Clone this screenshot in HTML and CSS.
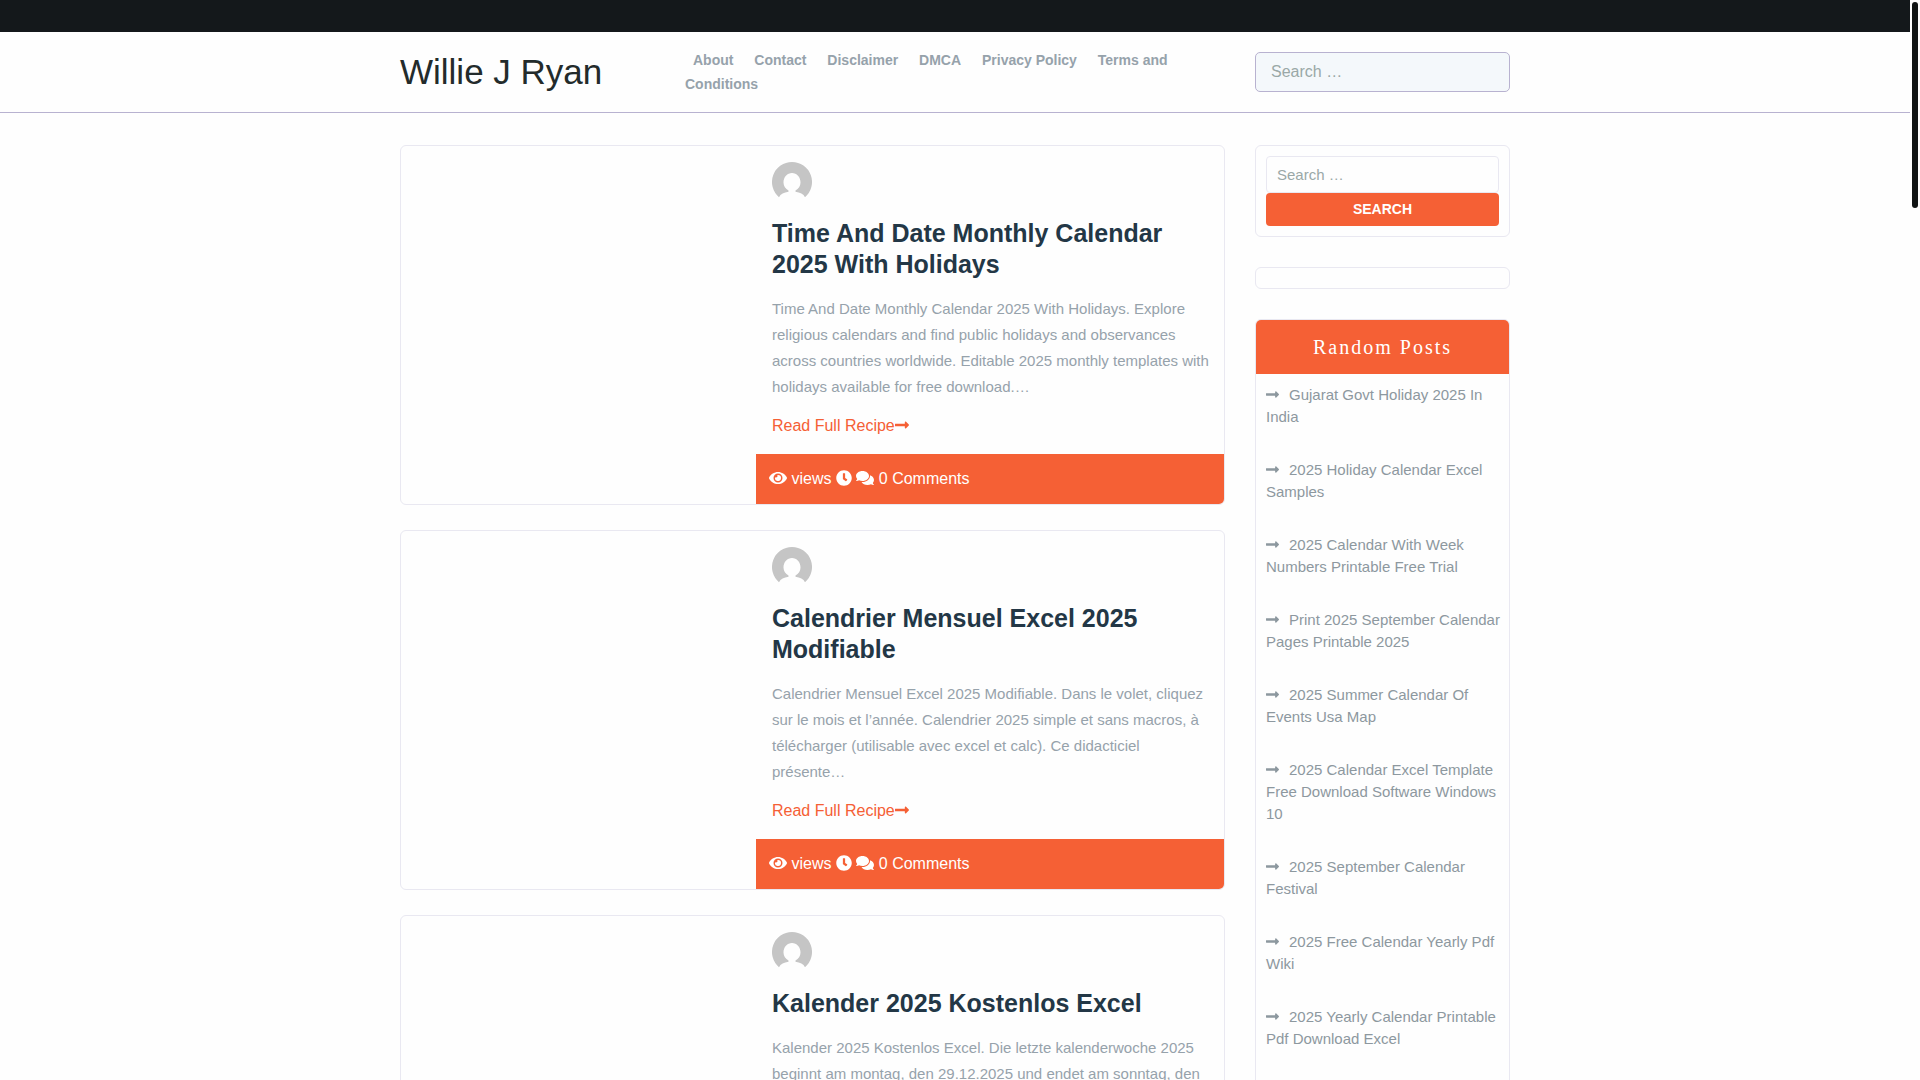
FILE: index.html
```html
<!DOCTYPE html>
<html lang="en">
<head>
<meta charset="utf-8">
<meta name="viewport" content="width=device-width, initial-scale=1">
<title>Willie J Ryan</title>
<link rel="stylesheet" href="styles.css">
</head>
<body>
<svg class="sprite" aria-hidden="true">
  <symbol id="arrow" viewBox="0 0 448 512"><path d="M313.941 216H12c-6.627 0-12 5.373-12 12v56c0 6.627 5.373 12 12 12h301.941v46.059c0 21.382 25.851 32.09 40.971 16.971l86.059-86.059c9.373-9.373 9.373-24.569 0-33.941l-86.059-86.059c-15.119-15.119-40.971-4.411-40.971 16.971V216z"/></symbol>
  <symbol id="eye" viewBox="0 0 576 512"><path d="M572.52 241.4C518.29 135.59 410.93 64 288 64S57.68 135.64 3.48 241.41a32.35 32.35 0 0 0 0 29.19C57.71 376.41 165.07 448 288 448s230.32-71.64 284.52-177.41a32.35 32.35 0 0 0 0-29.19zM288 400a144 144 0 1 1 144-144 143.93 143.93 0 0 1-144 144zm0-240a95.31 95.31 0 0 0-25.31 3.79 47.85 47.85 0 0 1-66.9 66.9A95.78 95.78 0 1 0 288 160z"/></symbol>
  <symbol id="clock" viewBox="0 0 512 512"><path d="M256 8C119 8 8 119 8 256s111 248 248 248 248-111 248-248S393 8 256 8zm57.100 350.100L224.900 294c-3.100-2.300-4.900-5.900-4.900-9.700V116c0-6.600 5.400-12 12-12h48c6.600 0 12 5.400 12 12v137.700l63.500 46.200c5.400 3.900 6.500 11.400 2.600 16.800l-28.200 38.800c-3.900 5.300-11.400 6.500-16.800 2.600z"/></symbol>
  <symbol id="comments" viewBox="0 0 576 512"><path d="M416 192c0-88.400-93.100-160-208-160S0 103.600 0 192c0 34.300 14.100 65.900 38 92-13.400 30.200-35.500 54.200-35.800 54.500-2.200 2.300-2.800 5.700-1.500 8.700S4.800 352 8 352c36.600 0 66.900-12.300 88.700-25 32.200 15.700 70.300 25 111.300 25 114.900 0 208-71.600 208-160zm122 220c23.900-26 38-57.700 38-92 0-66.900-53.500-124.200-129.300-148.100.9 6.600 1.300 13.300 1.300 20.100 0 105.900-107.700 192-240 192-10.800 0-21.300-.8-31.700-1.900C207.800 439.600 281.800 480 368 480c41 0 79.100-9.200 111.300-25 21.800 12.700 52.100 25 88.700 25 3.200 0 6.100-1.900 7.300-4.800 1.300-2.900.7-6.300-1.500-8.700-.3-.3-22.400-24.200-35.800-54.500z"/></symbol>
  <symbol id="avatar" viewBox="0 0 40 40"><path class="avatar-disc" d="M20 0a20 20 0 0 1 13 35.200C31.500 32 28 30.500 23.500 29.800L23.500 28.500C26.500 27 28.500 24 28.500 20.500C28.500 15 24.700 11 20 11S11.500 15 11.500 20.500C11.500 24 13.500 27 16.500 28.500L16.500 29.800C12 30.500 8.500 32 7 35.200A20 20 0 0 1 20 0z"/></symbol>
</svg>

<div class="topbar"></div>
<header class="header">
  <div class="container header-row">
    <a class="logo" href="#">Willie J Ryan</a>
    <nav class="nav" aria-label="Main">
      <a href="#">About</a>
      <a href="#">Contact</a>
      <a href="#">Disclaimer</a>
      <a href="#">DMCA</a>
      <a href="#">Privacy Policy</a>
      <a href="#">Terms and Conditions</a>
    </nav>
    <form class="header-search"><input type="search" placeholder="Search …" aria-label="Search the site"></form>
  </div>
</header>

<div class="container layout">
  <main class="posts">
    <article class="post">
      <div class="post-media"></div>
      <div class="post-main">
        <div class="post-body">
          <svg class="avatar" role="img" aria-label="Author"><use href="#avatar"/></svg>
          <h2><a href="#">Time And Date Monthly Calendar 2025 With Holidays</a></h2>
          <p>Time And Date Monthly Calendar 2025 With Holidays. Explore religious calendars and find public holidays and observances across countries worldwide. Editable 2025 monthly templates with holidays available for free download.…</p>
          <a class="more" href="#">Read Full Recipe<svg class="icon arrow"><use href="#arrow"/></svg></a>
        </div>
        <footer class="post-meta"><svg class="icon wide"><use href="#eye"/></svg> views <svg class="icon"><use href="#clock"/></svg> <svg class="icon wide"><use href="#comments"/></svg> 0 Comments</footer>
      </div>
    </article>
    <article class="post">
      <div class="post-media"></div>
      <div class="post-main">
        <div class="post-body">
          <svg class="avatar" role="img" aria-label="Author"><use href="#avatar"/></svg>
          <h2><a href="#">Calendrier Mensuel Excel 2025 Modifiable</a></h2>
          <p>Calendrier Mensuel Excel 2025 Modifiable. Dans le volet, cliquez sur le mois et l’année. Calendrier 2025 simple et sans macros, à télécharger (utilisable avec excel et calc). Ce didacticiel présente…</p>
          <a class="more" href="#">Read Full Recipe<svg class="icon arrow"><use href="#arrow"/></svg></a>
        </div>
        <footer class="post-meta"><svg class="icon wide"><use href="#eye"/></svg> views <svg class="icon"><use href="#clock"/></svg> <svg class="icon wide"><use href="#comments"/></svg> 0 Comments</footer>
      </div>
    </article>
    <article class="post">
      <div class="post-media"></div>
      <div class="post-main">
        <div class="post-body">
          <svg class="avatar" role="img" aria-label="Author"><use href="#avatar"/></svg>
          <h2><a href="#">Kalender 2025 Kostenlos Excel</a></h2>
          <p>Kalender 2025 Kostenlos Excel. Die letzte kalenderwoche 2025 beginnt am montag, den 29.12.2025 und endet am sonntag, den</p>
        </div>
      </div>
    </article>
  </main>

  <aside class="sidebar">
    <section class="widget">
      <form class="widget-search">
        <input type="search" placeholder="Search …" aria-label="Search posts">
        <button type="submit">SEARCH</button>
      </form>
    </section>
    <section class="widget"></section>
    <section class="widget">
      <h3>Random Posts</h3>
      <ul>
        <li><svg class="icon arrow"><use href="#arrow"/></svg><a href="#">Gujarat Govt Holiday 2025 In India</a></li>
        <li><svg class="icon arrow"><use href="#arrow"/></svg><a href="#">2025 Holiday Calendar Excel Samples</a></li>
        <li><svg class="icon arrow"><use href="#arrow"/></svg><a href="#">2025 Calendar With Week Numbers Printable Free Trial</a></li>
        <li><svg class="icon arrow"><use href="#arrow"/></svg><a href="#">Print 2025 September Calendar Pages Printable 2025</a></li>
        <li><svg class="icon arrow"><use href="#arrow"/></svg><a href="#">2025 Summer Calendar Of Events Usa Map</a></li>
        <li><svg class="icon arrow"><use href="#arrow"/></svg><a href="#">2025 Calendar Excel Template Free Download Software Windows 10</a></li>
        <li><svg class="icon arrow"><use href="#arrow"/></svg><a href="#">2025 September Calendar Festival</a></li>
        <li><svg class="icon arrow"><use href="#arrow"/></svg><a href="#">2025 Free Calendar Yearly Pdf Wiki</a></li>
        <li><svg class="icon arrow"><use href="#arrow"/></svg><a href="#">2025 Yearly Calendar Printable Pdf Download Excel</a></li>
      </ul>
    </section>
  </aside>
</div>
<div class="scroll-thumb"></div>
</body>
</html>
```
FILE: styles.css
```css
*, *::before, *::after { box-sizing: border-box; }
html { scrollbar-width: none; background: #fefefe; }
body {
  margin: 0;
  padding-right: 10px;
  font: 16px/24px "Liberation Sans", Arial, sans-serif;
  color: #8d989f;
  background: #fefefe;
}
a { color: inherit; text-decoration: none; }
h2, h3, p, ul { margin: 0; padding: 0; }
ul { list-style: none; }
input, button { font-family: inherit; margin: 0; }
input::placeholder { color: #9aa8a7; opacity: 1; }

.sprite { position: absolute; width: 0; height: 0; }
.icon { width: 16px; height: 16px; fill: currentColor; vertical-align: -2px; }
.icon.wide { width: 18px; }
.icon.arrow { width: 14px; }
.avatar-disc { fill: #c5c5c5; }

.container { max-width: 1110px; margin: 0 auto; }

.topbar { height: 32px; background: #14181b; }
.header { border-bottom: 1px solid #b8b2d0; padding: 16px 0; }
.header-row {
  display: grid;
  grid-template-columns: 255px minmax(0, 1fr) 255px;
  column-gap: 30px;
  align-items: center;
}
.logo { font-size: 35px; line-height: 48px; color: #232b2b; }
.nav { font-size: 14px; font-weight: bold; color: #96a2ab; }
.nav a { margin-right: 1px; padding: 0 8px; }
.header-search { display: flex; }
.header-search input {
  width: 100%;
  height: 40px;
  padding: 0 15px;
  font-size: 16px;
  border: 1px solid #b8b2d0;
  border-radius: 5px;
  background: #f4f8fb;
}

.layout {
  display: grid;
  grid-template-columns: minmax(0, 1fr) 255px;
  column-gap: 30px;
  align-items: start;
  padding-top: 32px;
}
.posts { display: grid; gap: 25px; }
.post {
  display: grid;
  grid-template-columns: minmax(0, 355fr) minmax(0, 468fr);
  min-height: 360px;
  border: 1px solid #e9e8f1;
  border-radius: 6px;
  overflow: hidden;
}
.post-main { display: flex; flex-direction: column; justify-content: space-between; }
.post-body { padding: 16px 12px 0 16px; }
.avatar { display: block; width: 40px; height: 40px; margin-bottom: 16px; }
.post h2 { font-size: 25px; line-height: 31px; color: #233746; margin-bottom: 16px; }
.post p { font-size: 15px; line-height: 26px; margin-bottom: 14px; color: #96a2ab; }
.more { color: #f56035; }
.post-meta { padding: 13px; background: #f56035; color: #fff; }

.sidebar { display: grid; gap: 30px; }
.widget {
  padding: 10px;
  border: 1px solid #e9e8f1;
  border-radius: 6px;
  overflow: hidden;
}
.widget-search { display: grid; }
.widget-search input {
  width: 100%;
  height: 37px;
  padding: 0 10px;
  font-size: 15px;
  border: 1px solid #e9e8f1;
  border-radius: 4px;
  background: #fefefe;
}
.widget-search button {
  height: 33px;
  padding: 0 0 2px;
  border: 0;
  border-radius: 4px;
  background: #f56035;
  color: #fff;
  font-size: 14px;
  font-weight: bold;
}
.widget h3 {
  margin: -10px -10px 10px;
  padding: 15px;
  background: #f56035;
  color: #fff;
  font: 20px/24px "Liberation Serif", "Times New Roman", serif;
  letter-spacing: 2px;
  text-align: center;
}
.widget ul { margin-right: -5px; }
.widget li { font-size: 15px; line-height: 22px; margin-bottom: 31px; }
.widget li .icon { width: 13px; height: 15px; margin-right: 10px; }

/* custom page scrollbar */
.scroll-thumb {
  position: fixed;
  top: 2px;
  right: 2px;
  width: 6px;
  height: 206px;
  border-radius: 3px;
  background: #111414;
}
```
